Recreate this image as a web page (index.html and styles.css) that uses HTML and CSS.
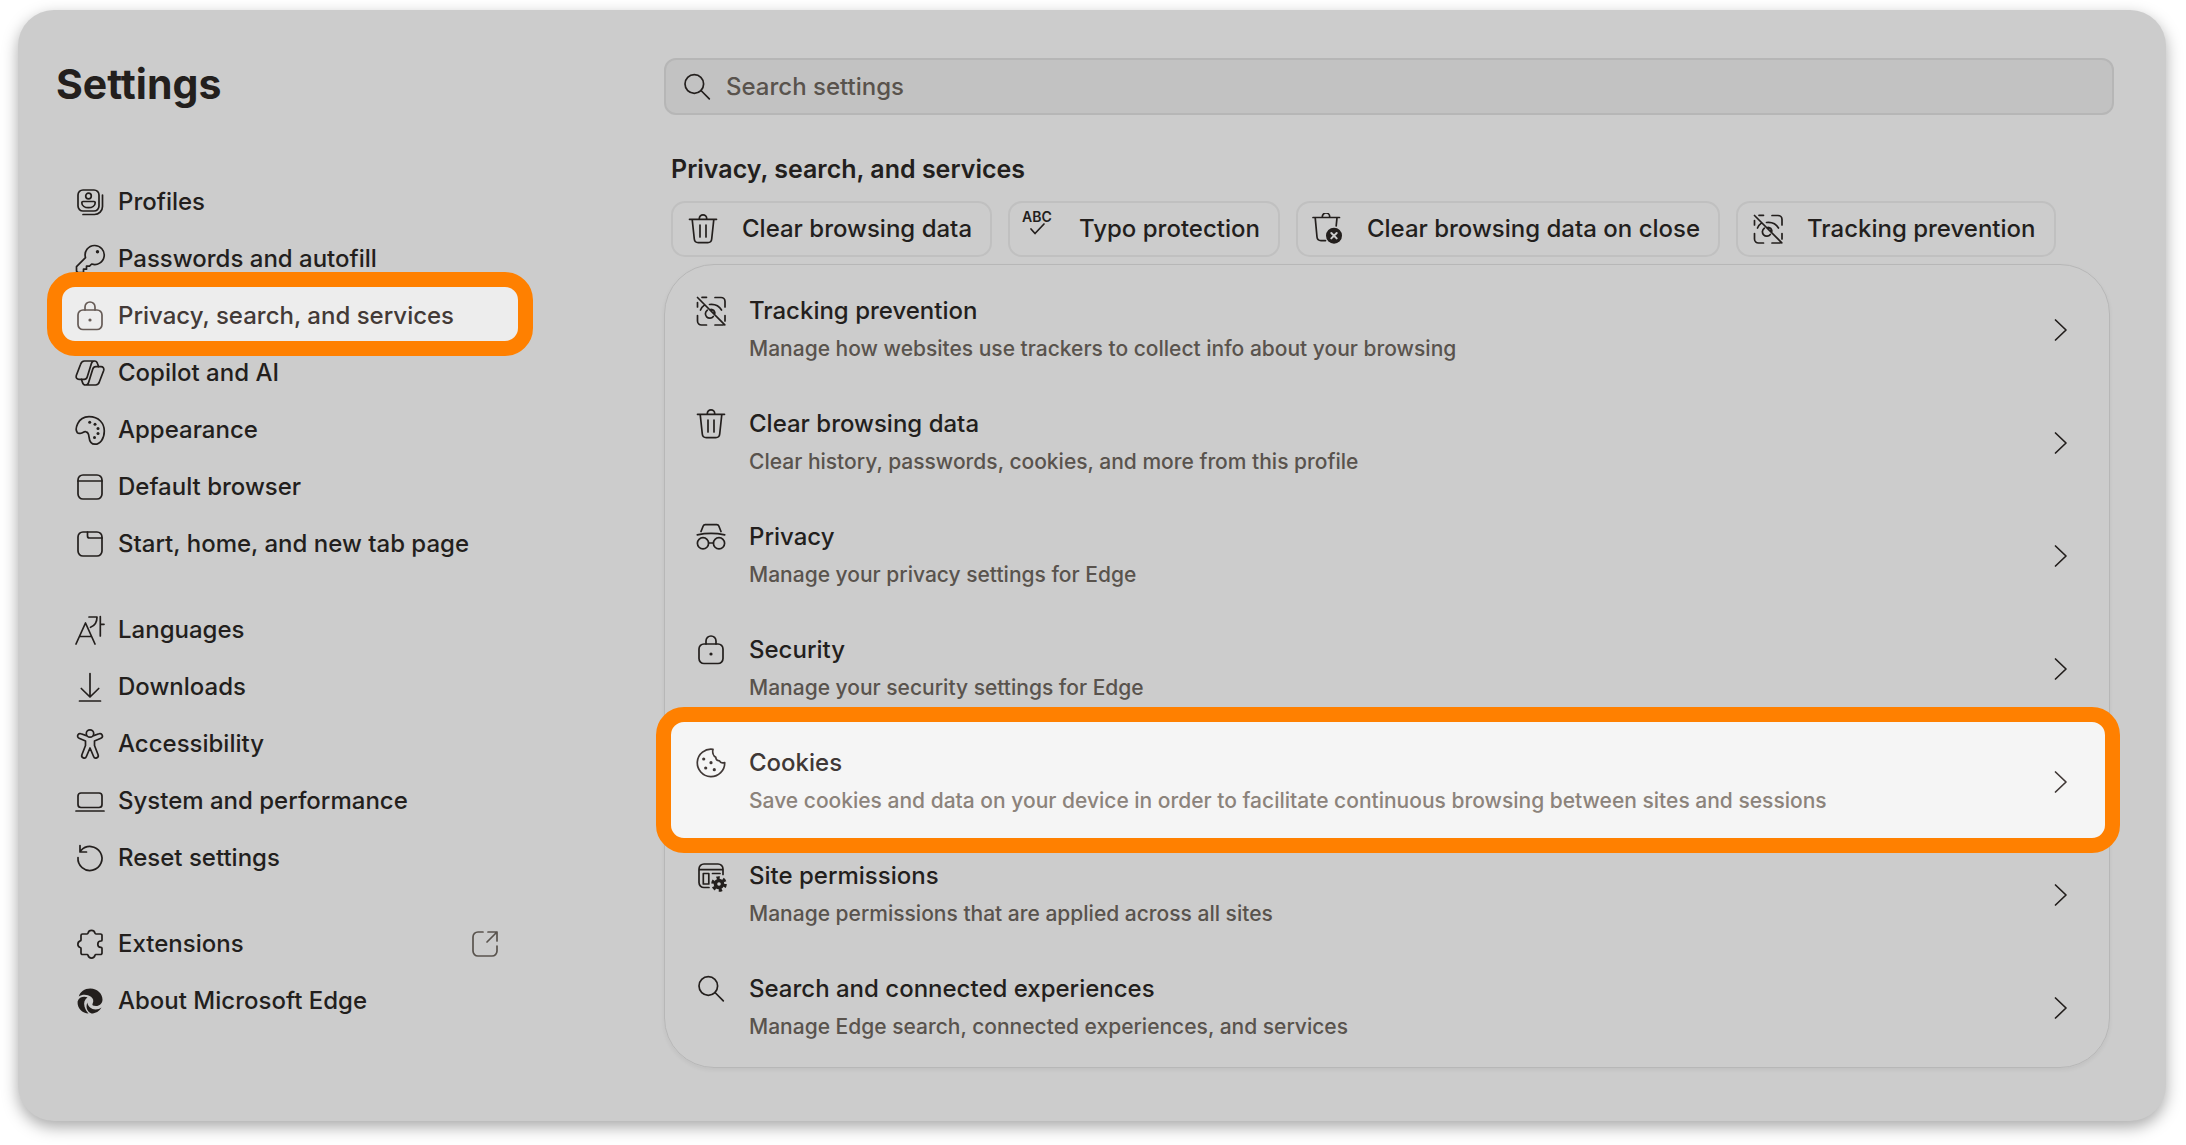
FILE: index.html
```html
<!DOCTYPE html>
<html lang="en">
<head>
<meta charset="utf-8">
<title>Settings</title>
<link rel="stylesheet" href="styles.css">
</head>
<body>
<svg class="sprite" aria-hidden="true">
  <symbol id="profiles" viewBox="0 0 32 32"><rect x="4" y="4" width="21" height="21" rx="5"/><path d="M9 28.500h11.500a8 8 0 0 0 8-8V9"/><circle cx="14.500" cy="10" r="2.800"/><path d="M9 15.500h11a1.200 1.200 0 0 1 1.200 1.200c0 3-3 5-6.700 5s-6.700-2-6.700-5A1.200 1.200 0 0 1 9 15.500z"/></symbol>
  <symbol id="key" viewBox="0 0 32 32"><path d="M20.500 2.500a9.500 9.500 0 1 1-2.800 18.500l-2.200 2.200h-3v3h-3v3.300H4.500a2 2 0 0 1-2-2v-3.800l9-9A9.500 9.500 0 0 1 20.500 2.500z"/><circle class="dot" cx="23.500" cy="8.700" r="1.700"/></symbol>
  <symbol id="lock" viewBox="0 0 32 32"><rect x="4" y="10" width="24" height="19.500" rx="5"/><path d="M11 10V7a5 5 0 0 1 10 0v3"/><circle class="dot" cx="16" cy="20" r="1.600"/></symbol>
  <symbol id="copilot" viewBox="0 0 32 32"><path d="M20.500 4H10.500C8.500 4 7.200 5.200 6.600 7.200L2.300 18.500C1.600 20.800 3 22.400 5 22.400h5.200c1.600 0 2.600-1 3.100-2.600L17.400 6.600C17.900 5 19 4 20.500 4c1.800 0 2.600 1 3.100 2.800l.9 2.800"/><path transform="rotate(180 16 16)" d="M20.500 4H10.500C8.500 4 7.200 5.200 6.600 7.200L2.300 18.500C1.600 20.800 3 22.400 5 22.400h5.200c1.600 0 2.600-1 3.100-2.600L17.400 6.600C17.900 5 19 4 20.500 4c1.800 0 2.600 1 3.100 2.800l.9 2.800"/></symbol>
  <symbol id="palette" viewBox="0 0 32 32"><path d="M3.300 18.600C.8 15.500 3 2.800 15 2.600c10 0 15.300 6.900 15.300 14.400 0 7.500-4 13.200-9.300 13.200-4.400 0-5.600-3.500-6-7.400-.3-3.200-1.200-4.600-3-5-2-.5-3 .9-5 1.400-1.400.4-2.800.4-3.700-.6z"/><g class="dot"><circle cx="15.700" cy="8.300" r="1.500"/><circle cx="21" cy="10.300" r="1.500"/><circle cx="24" cy="14.500" r="1.500"/><circle cx="24" cy="19.500" r="1.500"/><circle cx="20.500" cy="23.500" r="1.500"/></g></symbol>
  <symbol id="browser" viewBox="0 0 32 32"><rect x="4" y="4" width="24" height="24" rx="5"/><path d="M4 10h24"/></symbol>
  <symbol id="tab" viewBox="0 0 32 32"><rect x="4" y="4" width="24" height="24" rx="5"/><path d="M13.500 4v4a2 2 0 0 0 2 2H28"/></symbol>
  <symbol id="languages" viewBox="0 0 32 32"><path d="M2 30 11.500 9 21 30M5.500 22.500h12M15 3h8c0 5-1.500 8.500-6.500 10.300M26.300 2.500V22M26.300 10.300H30"/></symbol>
  <symbol id="download" viewBox="0 0 32 32"><path d="M16 2.500V25.500M7.300 17.500 16 26l8.700-8.500M5.500 30h21"/></symbol>
  <symbol id="accessibility" viewBox="0 0 32 32"><circle cx="16" cy="5.500" r="3.700"/><path d="M12.400 7.600 7 5.800a2.400 2.400 0 0 0-1.900 4.500l6.400 2.700v4.500L7.900 26.800a2.400 2.400 0 0 0 4.500 1.700L16 20l3.600 8.500a2.400 2.400 0 0 0 4.500-1.700L20.500 17.500V13l6.400-2.700A2.400 2.400 0 0 0 25 5.800l-5.400 1.800"/></symbol>
  <symbol id="laptop" viewBox="0 0 32 32"><rect x="4" y="8" width="24" height="14.500" rx="3"/><path d="M2 26h28"/></symbol>
  <symbol id="reset" viewBox="0 0 32 32"><path d="M4 15.500A12 12 0 1 0 7 8.500M6 3.500V10h6.500"/></symbol>
  <symbol id="puzzle" viewBox="0 0 32 32"><path d="M8.500 6H13a1 1 0 0 0 1-.8 3.600 3.600 0 0 1 7 0 1 1 0 0 0 1 .8h4.500A1.500 1.500 0 0 1 28 7.500V12a1 1 0 0 1-1 1 3.200 3.200 0 0 0 0 6.400 1 1 0 0 1 1 1V25a1.500 1.500 0 0 1-1.500 1.500H22a1 1 0 0 0-1 .8 3.600 3.600 0 0 1-7 0 1 1 0 0 0-1-.8H8.500A1.500 1.500 0 0 1 7 25v-4.500a1 1 0 0 0-.8-1 3.500 3.500 0 0 1 0-6.600 1 1 0 0 0 .8-1V7.500A1.500 1.500 0 0 1 8.500 6z"/></symbol>
  <symbol id="edge" viewBox="0 0 32 32"><g class="solid"><path d="M4.800 11.500C6 7 10.500 3.500 16.300 3.500c7.200 0 12.200 5.500 12.200 11 0 4-3 6.500-6.500 6.500-3 0-4-1-3.500-2 1.500-3 .8-5.500-1.500-7.200C13.500 9 8 9 4.800 11.500z"/><path d="M3.600 16.500C5 12 9.500 11 13.500 12.300c-3 2.200-4 5.700-3 9.200.8 3 2.300 5.300 4 7C8.500 28.300 3 23.500 3.600 16.500z"/><path d="M13.300 17.500c.5 4 4.200 7 8.200 7 2.500 0 4.500-.7 6-2-2 3.800-6 6-10 6-3.800-1.500-6.200-5.500-4.200-11z"/></g></symbol>
  <symbol id="external" viewBox="0 0 32 32"><path d="M14 4H9a5 5 0 0 0-5 5v14a5 5 0 0 0 5 5h14a5 5 0 0 0 5-5v-5M19 4h9v9M28 4 18 14"/></symbol>
  <symbol id="search" viewBox="0 0 32 32"><circle cx="13.300" cy="13" r="9.300"/><path d="M20 19.500 28.300 27.800"/></symbol>
  <symbol id="trash" viewBox="0 0 32 32"><path d="M2.500 6.300h27M12.300 6V5.500a3.700 3.700 0 0 1 7.400 0V6M5.200 6.500 7.300 26a4 4 0 0 0 4 3.600h9.400a4 4 0 0 0 4-3.600L26.800 6.500M13 12v12M19 12v12"/></symbol>
  <symbol id="trash-off" viewBox="2 0 32 32"><path d="M3 4.500h26.500M12.300 4.300V3.700a3.700 3.700 0 0 1 7.400 0v.6M5.200 4.700 7 24a4 4 0 0 0 4 3.600h4.500M27 4.700l-.8 8.300"/><circle class="solid" cx="24" cy="22.700" r="8"/><path class="knock" d="m21.300 20 5.400 5.400M26.700 20l-5.400 5.400"/></symbol>
  <symbol id="tracking" viewBox="0 0 32 32"><path d="M2.500 2.500 29.800 29.800M7 2.300h4.500M2.500 7.500V12M20 2.500h6a4 4 0 0 1 4 4V12M2.500 20.500V26a4 4 0 0 0 4 4h5M20 30h8M30 20.500V26M5.500 15c.8-2 2-3.600 3.600-4.600M14.500 9.500c5.500-.6 9.700 1.500 12 5.500M12.300 15.200a4.400 4.400 0 1 0 6 6.300M16 14.300a4.400 4.400 0 0 1 3.900 3.800"/></symbol>
  <symbol id="incognito" viewBox="0 0 32 32"><circle cx="8" cy="22.300" r="5.600"/><circle cx="24" cy="22.300" r="5.600"/><path d="M13.600 22h4.800M2.300 13.800Q16 11 29.700 13.800M6 10.500 8.200 5a2.200 2.200 0 0 1 2-1.400h11.600a2.200 2.200 0 0 1 2 1.400L26 10.500"/></symbol>
  <symbol id="cookie" viewBox="0 0 32 32"><path d="M18 2.300A13.700 13.700 0 1 0 29.700 15.500c-2 .8-4.200.3-5.200-1.600-2.300-.2-3.700-1.300-3.700-3.600C18.300 9 17.200 5.500 18 2.300z"/><g class="dot"><circle cx="8.700" cy="12" r="1.600"/><circle cx="16" cy="15.700" r="1.600"/><circle cx="10.700" cy="21" r="1.600"/><circle cx="19.300" cy="22.700" r="1.600"/></g></symbol>
  <symbol id="permissions" viewBox="0 0 32 32"><path d="M14 27.500H9a5 5 0 0 1-5-5V9a5 5 0 0 1 5-5h14a5 5 0 0 1 5 5v5.500M4 9.700h24M17.500 13.500h7.500"/><rect x="8.300" y="13.500" width="5.500" height="10.500"/><circle class="solid" cx="24" cy="24" r="5.300"/><circle class="teeth" cx="24" cy="24" r="6.300"/><circle class="hole" cx="24" cy="24" r="1.800"/></symbol>
  <symbol id="chevron" viewBox="0 0 32 32"><path d="M10.500 6 21 16 10.500 26"/></symbol>
</svg>

<div class="window">
  <aside class="sidebar">
    <h1>Settings</h1>
    <nav aria-label="Settings sections">
      <ul>
        <li><a href="#profiles-page"><svg class="icon"><use href="#profiles"/></svg><span>Profiles</span></a></li>
        <li><a href="#passwords-page"><svg class="icon"><use href="#key"/></svg><span>Passwords and autofill</span></a></li>
        <li><a href="#privacy-page" class="current" aria-current="page"><svg class="icon"><use href="#lock"/></svg><span>Privacy, search, and services</span></a></li>
        <li><a href="#copilot-page"><svg class="icon"><use href="#copilot"/></svg><span>Copilot and AI</span></a></li>
        <li><a href="#appearance-page"><svg class="icon"><use href="#palette"/></svg><span>Appearance</span></a></li>
        <li><a href="#default-page"><svg class="icon"><use href="#browser"/></svg><span>Default browser</span></a></li>
        <li><a href="#start-page"><svg class="icon"><use href="#tab"/></svg><span>Start, home, and new tab page</span></a></li>
      </ul>
      <ul>
        <li><a href="#languages-page"><svg class="icon"><use href="#languages"/></svg><span>Languages</span></a></li>
        <li><a href="#downloads-page"><svg class="icon"><use href="#download"/></svg><span>Downloads</span></a></li>
        <li><a href="#accessibility-page"><svg class="icon"><use href="#accessibility"/></svg><span>Accessibility</span></a></li>
        <li><a href="#system-page"><svg class="icon"><use href="#laptop"/></svg><span>System and performance</span></a></li>
        <li><a href="#reset-page"><svg class="icon"><use href="#reset"/></svg><span>Reset settings</span></a></li>
      </ul>
      <ul>
        <li><a href="#extensions-page"><svg class="icon"><use href="#puzzle"/></svg><span>Extensions</span><svg class="icon external"><use href="#external"/></svg></a></li>
        <li><a href="#about-page"><svg class="icon"><use href="#edge"/></svg><span>About Microsoft Edge</span></a></li>
      </ul>
    </nav>
  </aside>

  <main>
    <label class="searchbox">
      <svg class="icon"><use href="#search"/></svg>
      <input type="search" placeholder="Search settings" aria-label="Search settings">
    </label>
    <h2>Privacy, search, and services</h2>
    <div class="chips">
      <button type="button"><svg class="icon"><use href="#trash"/></svg>Clear browsing data</button>
      <button type="button"><svg class="icon" viewBox="0 0 32 32"><text class="abc" x="-2" y="9">ABC</text><path d="m7 16 4 4.500L20 11"/></svg>Typo protection</button>
      <button type="button"><svg class="icon"><use href="#trash-off"/></svg>Clear browsing data on close</button>
      <button type="button"><svg class="icon"><use href="#tracking"/></svg>Tracking prevention</button>
    </div>
    <div class="panel">
      <a href="#tracking-page" class="row"><svg class="icon"><use href="#tracking"/></svg><span class="text"><span class="title">Tracking prevention</span><span class="desc">Manage how websites use trackers to collect info about your browsing</span></span><svg class="icon chevron"><use href="#chevron"/></svg></a>
      <a href="#clear-page" class="row"><svg class="icon"><use href="#trash"/></svg><span class="text"><span class="title">Clear browsing data</span><span class="desc">Clear history, passwords, cookies, and more from this profile</span></span><svg class="icon chevron"><use href="#chevron"/></svg></a>
      <a href="#privacy-settings" class="row"><svg class="icon"><use href="#incognito"/></svg><span class="text"><span class="title">Privacy</span><span class="desc">Manage your privacy settings for Edge</span></span><svg class="icon chevron"><use href="#chevron"/></svg></a>
      <a href="#security-page" class="row"><svg class="icon"><use href="#lock"/></svg><span class="text"><span class="title">Security</span><span class="desc">Manage your security settings for Edge</span></span><svg class="icon chevron"><use href="#chevron"/></svg></a>
      <a href="#cookies-page" class="row spotlight"><svg class="icon"><use href="#cookie"/></svg><span class="text"><span class="title">Cookies</span><span class="desc">Save cookies and data on your device in order to facilitate continuous browsing between sites and sessions</span></span><svg class="icon chevron"><use href="#chevron"/></svg></a>
      <a href="#permissions-page" class="row"><svg class="icon"><use href="#permissions"/></svg><span class="text"><span class="title">Site permissions</span><span class="desc">Manage permissions that are applied across all sites</span></span><svg class="icon chevron"><use href="#chevron"/></svg></a>
      <a href="#search-page" class="row"><svg class="icon"><use href="#search"/></svg><span class="text"><span class="title">Search and connected experiences</span><span class="desc">Manage Edge search, connected experiences, and services</span></span><svg class="icon chevron"><use href="#chevron"/></svg></a>
    </div>
  </main>
</div>
</body>
</html>
```
FILE: styles.css
```css
:root {
  --surface: #ccc;
  --ink: #231f1d;
  --muted: #59534d;
  --accent: #ff8000;
}

* { box-sizing: border-box; }

body {
  margin: 0;
  padding: 10px 20px 24px 18px;
  background: #fff;
  color: var(--ink);
  font: 500 24px/32px Inter, "Liberation Sans", sans-serif;
}

a { color: inherit; text-decoration: none; }
h1, h2, ul { margin: 0; padding: 0; }
ul { list-style: none; }

.sprite { position: absolute; width: 0; height: 0; }

.icon {
  flex: none;
  width: 32px;
  height: 32px;
  overflow: visible;
  fill: none;
  stroke: currentColor;
  stroke-width: 1.7;
  stroke-linecap: round;
  stroke-linejoin: round;
}
.dot, .solid { fill: currentColor; stroke: none; }
.knock { stroke: var(--surface); stroke-width: 2; }
.teeth { stroke-width: 3; stroke-linecap: butt; stroke-dasharray: 3.3 3.3; }
.hole { fill: var(--surface); stroke: none; }
.abc { font: 600 14px/1 Inter, sans-serif; fill: currentColor; stroke: none; }

.window {
  display: grid;
  grid-template-columns: 646px 1fr;
  min-height: calc(100vh - 34px);
  background: var(--surface);
  border-radius: 36px;
  box-shadow: 0 6px 16px rgba(0, 0, 0, .34);
}

.sidebar { padding: 46px 146px 0 44px; }

h1 {
  margin-left: -6px;
  font-size: 41px;
  font-weight: 700;
  line-height: 56px;
}

nav {
  display: grid;
  gap: 34px;
  margin-top: 64px;
}
nav ul { display: grid; gap: 5px; }
nav a {
  position: relative;
  display: flex;
  align-items: center;
  gap: 12px;
  height: 52px;
  padding: 0 17px 0 12px;
}
.external { margin-left: auto; color: var(--muted); }

.current { z-index: 1; color: #433a37; }
.current .icon { color: #665b56; }
.current > *, .spotlight > * { position: relative; }
.current::before, .spotlight::before {
  content: "";
  position: absolute;
  inset: -18px -15px -14px;
  border: 15px solid var(--accent);
  border-radius: 28px;
  background: #ededed;
}

main { padding: 48px 52px 53px 0; }

.searchbox {
  display: flex;
  align-items: center;
  gap: 13px;
  height: 57px;
  padding: 0 15px;
  border: 2px solid #b6b6b6;
  border-radius: 12px;
  background: #c2c2c2;
}
.searchbox input {
  flex: 1;
  min-width: 0;
  padding: 0;
  border: 0;
  outline: 0;
  background: none;
  color: var(--ink);
  font: inherit;
}
.searchbox input::placeholder { color: var(--muted); opacity: 1; }

h2 {
  margin: 38px 0 16px 7px;
  font-size: 25px;
  font-weight: 600;
  line-height: 32px;
}

.chips {
  display: flex;
  flex-wrap: wrap;
  gap: 16px;
  margin-left: 7px;
}
.chips button {
  display: flex;
  align-items: center;
  gap: 23px;
  height: 56px;
  padding: 0 18px 0 14px;
  border: 2px solid #c0c0c0;
  border-radius: 14px;
  background: none;
  color: inherit;
  font: inherit;
}

.panel {
  display: grid;
  gap: 7px;
  margin: 7px 4px 0 0;
  padding: 7px 0 11px;
  border: 1px solid #b7b7b7;
  border-radius: 50px;
  box-shadow: 0 2px 4px rgba(0, 0, 0, .06);
}

.row {
  position: relative;
  display: flex;
  align-items: flex-start;
  gap: 22px;
  padding: 23px 32px 13px 30px;
}
.text {
  display: grid;
  flex: 1;
  gap: 6px;
}
.desc {
  color: var(--muted);
  font-size: 21px;
}
.chevron { align-self: center; }

.spotlight { color: #403836; }
.spotlight .desc { color: #8c837b; }
.spotlight::before {
  inset: -17px -11px -23px -9px;
  background: #f5f5f5;
}
```
